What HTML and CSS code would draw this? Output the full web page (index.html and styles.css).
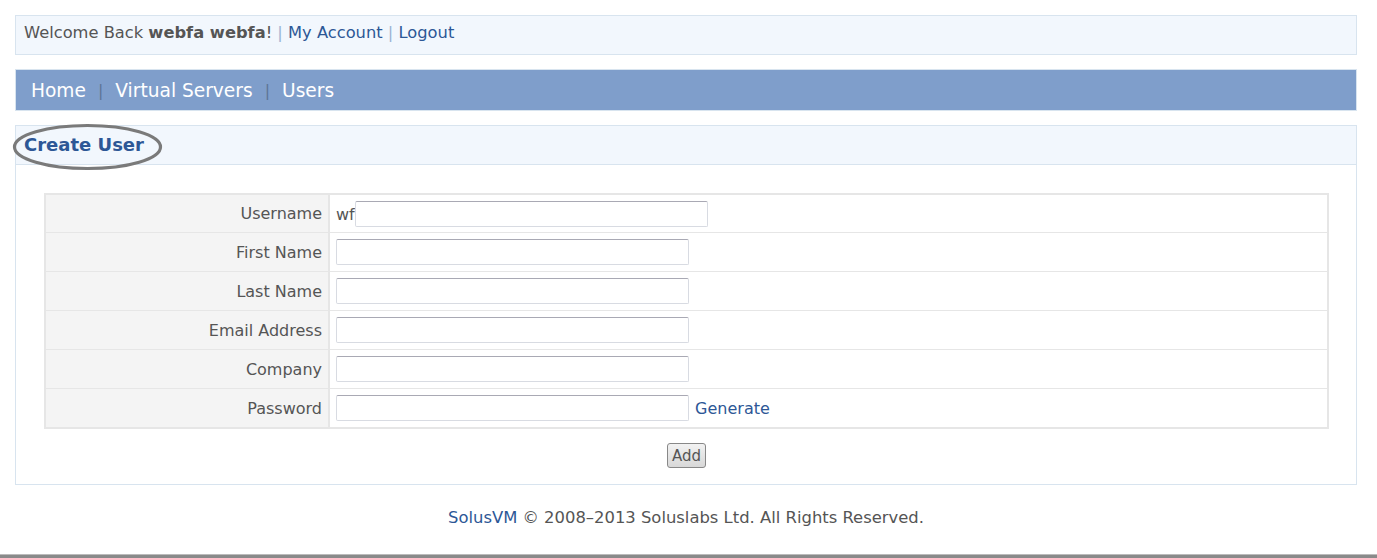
FILE: index.html
```html
<!DOCTYPE html>
<html>

<head>
  <title>SolusVM - Create User</title>
  <link rel="stylesheet" href="styles.css">
</head>

<body>

  <div class="wrap">
    <div class="welcome">
      Welcome Back <b>webfa webfa</b>! <span class="sep">|</span> <a href="#">My Account</a> <span class="sep">|</span> <a href="#">Logout</a>
    </div>

    <nav class="menu">
      <a href="#">Home</a>
      <span class="sep">|</span>
      <a href="#">Virtual Servers</a>
      <span class="sep">|</span>
      <a href="#">Users</a>
    </nav>

    <section class="panel">
      <div class="panel-head">
        <h2>Create User</h2>
        <svg class="circle" width="152" height="48" viewBox="0 0 152 48">
          <ellipse cx="75.5" cy="24" rx="73" ry="21.5" fill="none" stroke="#7a7a7a" stroke-width="3.2" />
        </svg>
      </div>

      <div class="panel-body">
        <table class="form">
          <tr>
            <td class="lbl">Username</td>
            <td class="fld"><span class="prefix">wf</span><input type="text"></td>
          </tr>
          <tr>
            <td class="lbl">First Name</td>
            <td class="fld"><input type="text"></td>
          </tr>
          <tr>
            <td class="lbl">Last Name</td>
            <td class="fld"><input type="text"></td>
          </tr>
          <tr>
            <td class="lbl">Email Address</td>
            <td class="fld"><input type="text"></td>
          </tr>
          <tr>
            <td class="lbl">Company</td>
            <td class="fld"><input type="text"></td>
          </tr>
          <tr>
            <td class="lbl">Password</td>
            <td class="fld"><input type="text"> <a href="#">Generate</a></td>
          </tr>
        </table>

        <div class="actions">
          <button type="button">Add</button>
        </div>
      </div>
    </section>

    <footer>
      <a href="#">SolusVM</a> &copy; 2008&ndash;2013 Soluslabs Ltd. All Rights Reserved.
    </footer>
  </div>

  <div class="bottom-bar"></div>

</body>

</html>
```

FILE: styles.css
```css
body {
  font-family: "DejaVu Sans", Verdana, sans-serif;
  font-size: 16px;
  color: #555;
  background: #fff;
  margin: 0;
  padding: 0;
  min-height: 558px;
  display: flex;
  flex-direction: column;
}

a {
  color: #2d5796;
  text-decoration: none;
}

.wrap {
  flex: 1;
  padding: 15px 20px 0 15px;
}

.welcome {
  background: #f2f7fd;
  border: 1px solid #d8e4ef;
  height: 38px;
  line-height: 34px;
  padding: 0 8px;
  font-size: 16.3px;
}

.welcome b {
  color: #555;
}

.welcome .sep {
  color: #9bb3d3;
}

.menu {
  margin-top: 14px;
  background: #7f9ecb;
  border: 1px solid #d8e4ef;
  height: 39px;
  box-sizing: content-box;
  display: flex;
  align-items: center;
  padding: 1px 15px 0;
  font-size: 18.6px;
}

.menu a {
  color: #fff;
}

.menu .sep {
  color: #5d7597;
  font-size: 16px;
  margin: 0 12px;
}

.panel {
  margin-top: 14px;
  border: 1px solid #d8e4ef;
  background: #fff;
}

.panel-head {
  position: relative;
  background: #f2f7fd;
  border-bottom: 1px solid #d8e4ef;
  height: 38px;
  display: flex;
  align-items: center;
  padding: 0 8px;
}

.panel-head h2 {
  margin: 0 0 2px;
  font-size: 18px;
  font-weight: bold;
  color: #2d5796;
}

.circle {
  position: absolute;
  left: -4px;
  top: -3px;
}

.panel-body {
  padding: 28px 27px 16px 28px;
}

.form {
  width: 100%;
  border-collapse: collapse;
  border: 2px solid #e6e6e6;
}

.form td {
  height: 38px;
  border-top: 1px solid #e6e6e6;
  padding: 0;
}

.form tr:first-child td {
  height: 37px;
}

.form .lbl {
  width: 276px;
  background: #f4f4f4;
  text-align: right;
  padding-right: 6px;
  border-right: 2px solid #e6e6e6;
}

.form .fld {
  padding-left: 6px;
}

.form input {
  width: 353px;
  height: 26px;
  box-sizing: border-box;
  border: 1px solid #d8dbe2;
  border-top-color: #a9a9b4;
  border-radius: 2px;
  vertical-align: middle;
  margin: 0;
  font-family: inherit;
}

.prefix {
  vertical-align: middle;
}

.form a {
  vertical-align: middle;
  margin-left: 1px;
}

.actions {
  text-align: center;
  padding-top: 14px;
}

.actions button {
  font-family: inherit;
  font-size: 15px;
  color: #555;
  height: 25px;
  padding: 0 4px;
  border: 1px solid #888;
  border-radius: 3px;
  background: linear-gradient(#f2f2f2, #d8d8d8);
}

footer {
  text-align: center;
  padding-top: 23px;
  font-size: 16.4px;
}

.bottom-bar {
  height: 3px;
  background: #8a8a8a;
  border-top: 1px solid #bbb;
}
```
